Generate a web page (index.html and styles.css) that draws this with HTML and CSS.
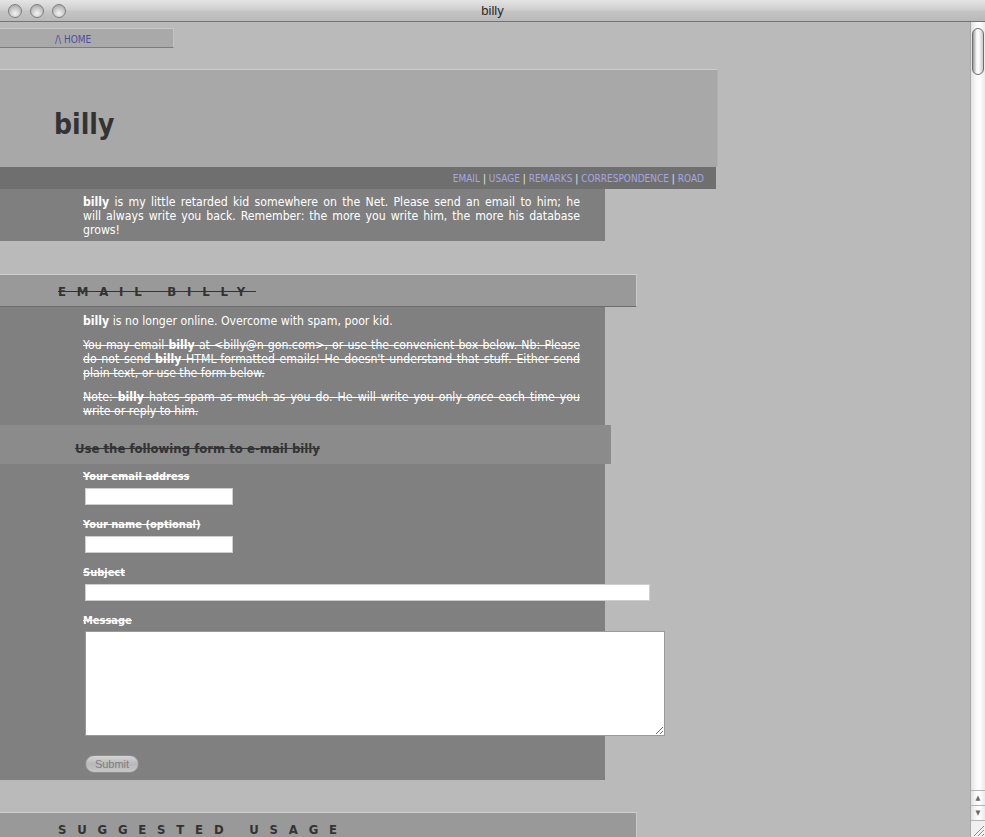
FILE: index.html
```html
<!DOCTYPE html>
<html lang="en">
<head>
    <meta charset="UTF-8">
    <title>billy</title>
    <link rel="stylesheet" href="styles.css">
</head>
<body>
    <div class="titlebar">
        <div class="lights">
            <span class="light"></span>
            <span class="light"></span>
            <span class="light"></span>
        </div>
        <div class="title">billy</div>
    </div>

    <div class="viewport">
        <div class="page">
            <div class="home-tab"><a href="#">/\ HOME</a></div>

            <div class="masthead">
                <h1>billy</h1>
            </div>

            <div class="nav">
                <a href="#">EMAIL</a> <span class="sep">|</span>
                <a href="#">USAGE</a> <span class="sep">|</span>
                <a href="#">REMARKS</a> <span class="sep">|</span>
                <a href="#">CORRESPONDENCE</a> <span class="sep">|</span>
                <a href="#">ROAD</a>
            </div>

            <div class="intro">
                <p><span class="full-line"><b>billy</b> is my little retarded kid somewhere on the Net. Please send an email to him; he</span> will always write you back. Remember: the more you write him, the more his database grows!</p>
            </div>

            <div class="section-head">
                <h2 class="struck">EMAIL BILLY</h2>
            </div>

            <div class="section-body">
                <p><b>billy</b> is no longer online. Overcome with spam, poor kid.</p>
                <p class="struck">You may email <b>billy</b> at &lt;billy@n-gon.com&gt;, or use the convenient box below. Nb: Please do not send <b>billy</b> HTML-formatted emails! He doesn't understand that stuff. Either send plain text, or use the form below.</p>
                <p class="struck">Note: <b>billy</b> hates spam as much as you do. He will write you only <i>once</i> each time you write or reply to him.</p>
            </div>

            <div class="form-head">
                <h3>Use the following form to e-mail billy</h3>
            </div>

            <form class="mail-form">
                <label for="from">Your email address</label>
                <input type="text" id="from" class="field">
                <label for="name">Your name (optional)</label>
                <input type="text" id="name" class="field">
                <label for="subject">Subject</label>
                <input type="text" id="subject" class="field wide">
                <label for="message">Message</label>
                <textarea id="message"></textarea>
                <button type="button" class="submit">Submit</button>
            </form>

            <div class="section-head usage">
                <h2>SUGGESTED USAGE</h2>
            </div>
        </div>

        <div class="scrollbar">
            <div class="track">
                <div class="thumb"></div>
            </div>
            <div class="arrow up">&#9650;</div>
            <div class="arrow down">&#9660;</div>
            <div class="grip">
                <svg width="15" height="17" viewBox="0 0 15 17">
                    <path d="M3 15 L13 5 M7 15 L13 9 M11 15 L13 13" stroke="#8a8a8a" stroke-width="1"/>
                    <path d="M4 15 L13 6 M8 15 L13 10" stroke="#ffffff" stroke-width="1"/>
                </svg>
            </div>
        </div>
    </div>
</body>
</html>
```

FILE: styles.css
```css
* {
    margin: 0;
    padding: 0;
    box-sizing: border-box;
}

body {
    width: 985px;
    height: 837px;
    overflow: hidden;
    background-color: #bababa;
    font-family: "DejaVu Sans Condensed", "DejaVu Sans", sans-serif;
    font-size: 11px;
    line-height: 14px;
    color: #fff;
}

/* window chrome */
.titlebar {
    position: relative;
    height: 22px;
    background: linear-gradient(#e4e4e4, #cfcfcf 45%, #c4c4c4 55%, #b9b9b9);
    border-bottom: 1px solid #747474;
    display: flex;
    align-items: center;
}

.lights {
    display: flex;
    gap: 8px;
    padding-left: 8px;
}

.light {
    width: 14px;
    height: 14px;
    border-radius: 50%;
    border: 1px solid #7d7d7d;
    background: radial-gradient(circle at 50% 70%, #f4f4f4, #c4c4c4 55%, #9a9a9a);
}

.title {
    position: absolute;
    left: 0;
    right: 0;
    text-align: center;
    font-family: "Liberation Sans", sans-serif;
    font-size: 13px;
    color: #2a2a2a;
}

.viewport {
    display: flex;
    height: 815px;
}

.page {
    flex: 1;
    overflow: hidden;
}

/* page */
.home-tab {
    width: 174px;
    height: 20px;
    margin-top: 6px;
    background-color: #a9a9a9;
    border-top: 1px solid #c8c8c8;
    border-right: 1px solid #c4c4c4;
    border-bottom: 1px solid #7c7c7c;
    padding-left: 55px;
    line-height: 21px;
    font-size: 10px;
}

.home-tab a {
    color: #4d4d9e;
    text-decoration: none;
}

.masthead {
    width: 718px;
    height: 98px;
    margin-top: 21px;
    background-color: #a8a8a8;
    border-top: 1px solid #cdcdcd;
    border-right: 1px solid #b0b0b0;
    padding: 38px 0 0 54px;
}

.masthead h1 {
    font-size: 28px;
    line-height: 34px;
    color: #333;
}

.nav {
    width: 716px;
    height: 22px;
    background-color: #6f6f6f;
    text-align: right;
    padding: 2px 12px 0 0;
    font-size: 10px;
    line-height: 20px;
}

.nav a {
    color: #a6a6e8;
    text-decoration: none;
}

.nav .sep {
    color: #e8e8e8;
}

.intro {
    width: 605px;
    background-color: #7f7f7f;
    padding: 6px 25px 4px 83px;
    font-size: 12.2px;
    text-align: justify;
}

.intro .full-line {
    display: block;
    text-align-last: justify;
}

.section-head {
    width: 637px;
    height: 33px;
    margin-top: 33px;
    background-color: #999;
    border-top: 1px solid #cfcfcf;
    border-right: 1px solid #c9c9c9;
    border-bottom: 1px solid #6e6e6e;
    padding: 2px 0 0 58px;
}

.section-head h2 {
    display: inline-block;
    font-size: 13px;
    line-height: 30px;
    letter-spacing: 10.8px;
    color: #333;
}

.struck {
    text-decoration: line-through;
}

.section-body {
    width: 605px;
    background-color: #808080;
    padding: 7px 25px 7px 83px;
    font-size: 12.2px;
    text-align: justify;
}

.section-body p + p {
    margin-top: 10px;
}

.form-head {
    width: 611px;
    height: 39px;
    background-color: #8b8b8b;
    padding: 2px 0 0 75px;
}

.form-head h3 {
    font-size: 13px;
    line-height: 44px;
    color: #333;
    text-decoration: line-through;
}

.mail-form {
    width: 605px;
    background-color: #808080;
    padding: 6px 0 7px 83px;
}

.mail-form label {
    display: block;
    font-weight: bold;
    text-decoration: line-through;
}

.field {
    display: block;
    width: 148px;
    height: 17px;
    margin: 4px 0 13px 2px;
    border: 1px solid #cfcfcf;
    background-color: #fff;
}

.field.wide {
    width: 565px;
}

.mail-form textarea {
    display: block;
    width: 580px;
    height: 105px;
    margin: 3px 0 0 2px;
    border: 1px solid #9a9a9a;
    background-color: #fff;
}

.submit {
    display: block;
    width: 54px;
    height: 18px;
    margin: 19px 0 0 2px;
    border: 1px solid #8e8e8e;
    border-radius: 9px;
    background: linear-gradient(#d4d4d4, #b8b8b8 50%, #c6c6c6);
    color: #7e7e7e;
    font-family: "Liberation Sans", sans-serif;
    font-size: 11px;
}

.section-head.usage {
    margin-top: 32px;
}

/* scrollbar */
.scrollbar {
    width: 15px;
    display: flex;
    flex-direction: column;
    background: linear-gradient(90deg, #e2e2e2, #fafafa 40%, #ffffff 60%, #eaeaea);
    border-left: 1px solid #a8a8a8;
}

.track {
    flex: 1;
    padding: 6px 1px 0 1px;
}

.thumb {
    height: 47px;
    border: 1px solid #6e6e6e;
    border-radius: 7px;
    background: linear-gradient(90deg, #9a9a9a, #f2f2f2 35%, #ffffff 55%, #c8c8c8);
}

.arrow {
    height: 15px;
    border-top: 1px solid #b4b4b4;
    text-align: center;
    font-size: 7px;
    line-height: 14px;
    color: #6a6a6a;
}

.grip {
    height: 17px;
    border-top: 1px solid #b4b4b4;
    background-color: #f0f0f0;
}

.grip svg {
    display: block;
}
```
